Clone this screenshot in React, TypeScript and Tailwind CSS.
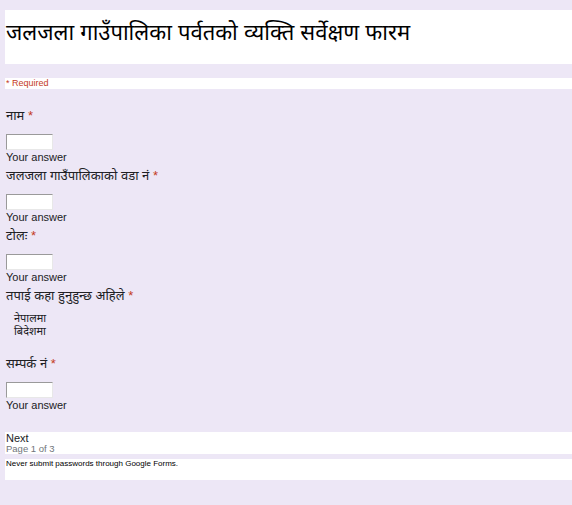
import React from 'react';

const font = { fontFamily: '"Liberation Sans", "Noto Sans", "Noto Sans Devanagari", sans-serif' };

const Req = () => <span className="text-[#c43b1d]"> *</span>;

const TextQuestion = ({ label }: { label: string }) => (
  <div className="flex flex-col items-start">
    <div className="text-[13px] leading-[18px] text-[#202124]">
      {label}
      <Req />
    </div>
    <input
      type="text"
      aria-label={label}
      className="mt-[9px] h-[16px] w-[47px] bg-white border border-t-[#9a9a9a] border-l-[#9a9a9a] border-r-[#e8e8e8] border-b-[#e8e8e8] outline-none"
    />
    <div className="text-[11px] leading-[14px] text-[#202124]">Your answer</div>
  </div>
);

export default function App() {
  return (
    <div className="min-h-[505px] w-[572px] bg-[#ede7f6] pt-[10px]" style={font}>
      <div className="ml-[5px] h-[54px] bg-white pl-[1px] pt-[7px]">
        <h1 className="text-[22px] leading-[32px] text-black">जलजला गाउँपालिका पर्वतको व्यक्ति सर्वेक्षण फारम</h1>
      </div>
      <div className="mt-[14px] ml-[5px] h-[11px] bg-white pl-[1px] text-[9px] leading-[11px] text-[#c43b1d]">* Required</div>

      <div className="mt-[18px] ml-[6px] flex flex-col gap-[3px]">
        <TextQuestion label="नाम" />
        <TextQuestion label="जलजला गाउँपालिकाको वडा नं" />
        <TextQuestion label="टोलः" />
        <div className="flex flex-col">
          <div className="text-[13px] leading-[18px] text-[#202124]">
            तपाई कहा हुनुहुन्छ अहिले
            <Req />
          </div>
          <div className="mt-[7px] ml-[8px] flex flex-col text-[11px] leading-[13px] text-[#202124]">
            <span>नेपालमा</span>
            <span>बिदेशमा</span>
          </div>
        </div>
        <div className="mt-[14px]">
          <TextQuestion label="सम्पर्क नं" />
        </div>
      </div>

      <div className="mt-[20px] ml-[5px] h-[22px] bg-white pl-[1px]">
        <div className="text-[11px] leading-[12px] text-[#202124]">Next</div>
        <div className="text-[9.5px] leading-[10px] text-[#70757a]">Page 1 of 3</div>
      </div>
      <div className="mt-[5px] ml-[5px] h-[21px] bg-white pl-[1px] text-[8px] leading-[10px] text-black">
        Never submit passwords through Google Forms.
      </div>
    </div>
  );
}
